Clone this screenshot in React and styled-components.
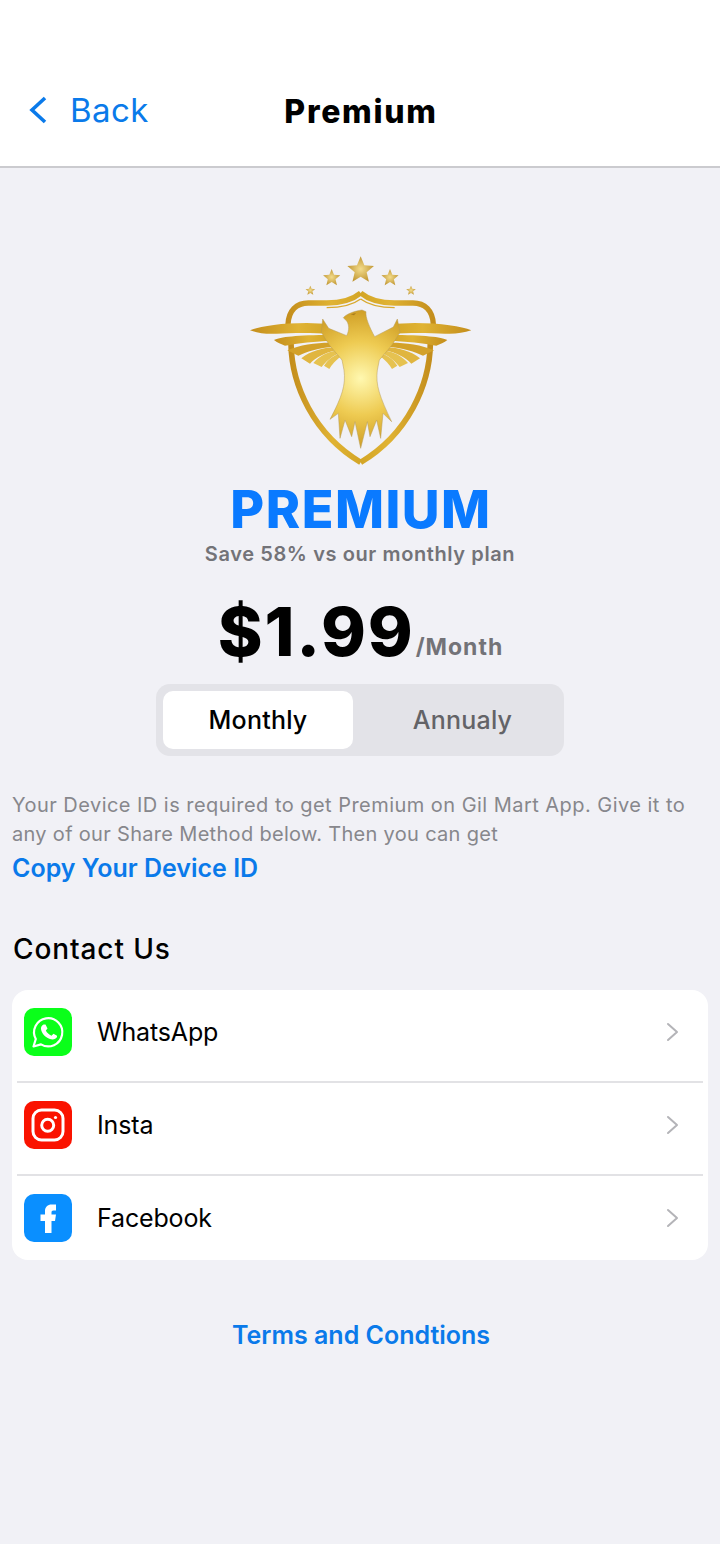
import React from "react";
import styled, { createGlobalStyle } from "styled-components";

const Global = createGlobalStyle`
  html, body { margin: 0; padding: 0; background: #f1f1f6; }
  body { font-family: Inter, "Liberation Sans", sans-serif; }
  * { box-sizing: border-box; }
`;

const Page = styled.div`
  width: 720px;
  height: 1544px;
  overflow: hidden;
  background: #f1f1f6;
  display: flex;
  flex-direction: column;
`;

const Header = styled.header`
  height: 168px;
  flex: none;
  background: #fff;
  border-bottom: 2px solid #cbcbcf;
  display: grid;
  grid-template-columns: 1fr auto 1fr;
  align-items: start;
  padding: 90px 0 0 0;
`;

const BackLink = styled.a`
  display: flex;
  align-items: center;
  gap: 21px;
  padding-left: 27px;
  height: 40px;
  font-size: 33px;
  letter-spacing: 0.4px;
  color: #0a7aea;
  svg { display: block; }
`;

const HeaderTitle = styled.h1`
  margin: 2px 0 0;
  padding-left: 2px;
  line-height: 40px;
  font-size: 32px;
  font-weight: 800;
  letter-spacing: 1.7px;
  color: #000;
`;

const Hero = styled.section`
  display: flex;
  flex-direction: column;
  align-items: center;
  padding-top: 77px;
`;

const Emblem = styled.svg`
  width: 260px;
  height: 230px;
  display: block;
  filter: blur(0.5px);
`;

const PlanName = styled.h2`
  margin: 5px 0 0 2px;
  font-size: 52px;
  line-height: 60px;
  font-weight: 800;
  letter-spacing: 1.5px;
  color: #0a7aff;
`;

const Saving = styled.p`
  margin: 0;
  font-size: 20px;
  line-height: 28px;
  font-weight: 600;
  letter-spacing: 0.6px;
  color: #737378;
`;

const PriceRow = styled.div`
  display: flex;
  align-items: baseline;
  margin-top: 25px;
  margin-left: 1px;
  height: 76px;
`;

const Price = styled.span`
  font-size: 68px;
  line-height: 76px;
  font-weight: 800;
  letter-spacing: 1.8px;
  color: #000;
`;

const Period = styled.span`
  font-size: 23px;
  font-weight: 700;
  letter-spacing: 1px;
  color: #737378;
  margin-left: 1px;
  position: relative;
  top: -1px;
`;

const Segment = styled.div`
  width: 408px;
  height: 72px;
  margin-top: 15px;
  padding: 7px;
  border-radius: 14px;
  background: #e3e3e8;
  display: grid;
  grid-template-columns: 190px 1fr;
`;

const SegmentItem = styled.div`
  display: flex;
  align-items: center;
  justify-content: center;
  border-radius: 10px;
  font-size: 25px;
  font-weight: 500;
  letter-spacing: 0.2px;
  padding-left: ${(p) => (p.$active ? "0" : "15px")};
  background: ${(p) => (p.$active ? "#fff" : "transparent")};
  color: ${(p) => (p.$active ? "#000" : "#636367")};
`;

const Info = styled.section`
  padding: 35px 12px 0;
`;

const InfoLine = styled.span`
  display: block;
  font-size: 20px;
  line-height: 29px;
  letter-spacing: ${(p) => p.$spacing};
  color: #87878c;
`;

const CopyLink = styled.a`
  display: block;
  margin-top: 4px;
  font-size: 25px;
  line-height: 30px;
  font-weight: 600;
  color: #0a7aea;
`;

const ContactTitle = styled.h3`
  margin: 49px 0 0 1px;
  font-size: 28px;
  line-height: 34px;
  font-weight: 500;
  letter-spacing: 0.9px;
  color: #000;
`;

const Card = styled.ul`
  list-style: none;
  margin: 24px 12px 0;
  padding: 0;
  height: 270px;
  background: #fff;
  border-radius: 16px;
  overflow: hidden;
`;

const Row = styled.li`
  position: relative;
  height: 93px;
  padding: 18px 28px 0 12px;
  display: flex;
  align-items: flex-start;
  &:not(:last-child)::after {
    content: "";
    position: absolute;
    left: 5px;
    right: 5px;
    bottom: 0;
    height: 2px;
    background: #e2e2e5;
  }
`;

const IconTile = styled.svg`
  width: 48px;
  height: 48px;
  flex: none;
  display: block;
  border-radius: 10px;
  background: ${(p) => p.$bg};
`;

const RowLabel = styled.span`
  flex: 1;
  margin-left: 25px;
  font-size: 25px;
  line-height: 48px;
  letter-spacing: -0.15px;
  color: #000;
`;

const Chevron = styled.svg`
  width: 14px;
  height: 20px;
  margin-top: 14px;
  display: block;
`;

const Terms = styled.a`
  display: block;
  margin-top: 60px;
  padding-left: 2px;
  text-align: center;
  font-size: 25px;
  line-height: 30px;
  font-weight: 600;
  color: #0a7aea;
`;

const star = (cx, cy, r) => {
  const pts = [];
  for (let i = 0; i < 10; i++) {
    const rad = i % 2 ? r * 0.45 : r;
    const a = -Math.PI / 2 + (i * Math.PI) / 5;
    pts.push(`${(cx + rad * Math.cos(a)).toFixed(1)},${(cy + rad * Math.sin(a)).toFixed(1)}`);
  }
  return pts.join(" ");
};

function WingHalf() {
  return (
    <g>
      <path d="M392 144C368 164 335 174 290 174L235 174C200 174 176 196 174 238" fill="none" stroke="url(#goldBand)" strokeWidth="16" />
      <path d="M392 162C368 180 335 188 290 188" fill="none" stroke="#d8a92e" strokeWidth="4" />
      <path d="M183 296C185 420 250 567 392 652" fill="none" stroke="url(#goldBand)" strokeWidth="17" />
      <path d="M60 256C90 244 150 234 230 234L285 236L303 266C230 262 180 264 140 266C110 268 85 264 60 256Z" fill="url(#goldBand)" />
      <path d="M132 285C150 276 200 270 304 270L306 288C260 288 200 296 165 302C155 298 140 292 132 285Z" fill="url(#goldBand)" />
      <path d="M172 316C210 298 265 292 308 293L310 305C270 307 225 322 205 332Z" fill="#d3a129" />
      <path d="M214 340C240 318 280 308 314 306L318 316C285 322 255 340 240 356Z" fill="#e0b53f" />
      <path d="M250 354C270 332 295 320 322 316L324 326C305 334 285 352 275 366Z" fill="#e6c250" />
      <path d="M282 362C295 342 310 332 328 326L332 336C318 344 305 360 298 372Z" fill="#e6c250" />
    </g>
  );
}

function EagleEmblem() {
  return (
    <Emblem viewBox="0 0 780 690">
      <defs>
        <linearGradient id="goldBand" x1="0" y1="0" x2="1" y2="0">
          <stop offset="0" stopColor="#c48e1c" />
          <stop offset="0.6" stopColor="#e0b333" />
          <stop offset="1" stopColor="#d3a526" />
        </linearGradient>
        <radialGradient id="goldBody" gradientUnits="userSpaceOnUse" cx="392" cy="400" r="220">
          <stop offset="0" stopColor="#fff8b0" />
          <stop offset="0.5" stopColor="#eecb52" />
          <stop offset="1" stopColor="#cb981f" />
        </radialGradient>
        <radialGradient id="goldStar" cx="0.5" cy="0.5" r="0.6">
          <stop offset="0" stopColor="#f3dc8c" />
          <stop offset="1" stopColor="#b98c26" />
        </radialGradient>
      </defs>
      <polygon points={star(392, 76, 42)} fill="url(#goldStar)" />
      <polygon points={star(305, 99, 27)} fill="url(#goldStar)" />
      <polygon points={star(480, 99, 27)} fill="url(#goldStar)" />
      <polygon points={star(241, 137, 15)} fill="url(#goldStar)" />
      <polygon points={star(543, 137, 15)} fill="url(#goldStar)" />
      <WingHalf />
      <g transform="translate(784 0) scale(-1 1)">
        <WingHalf />
      </g>
      <path
        d="M278 222L296 250L350 272C358 256 358 240 350 228L340 218C350 206 375 198 396 195L408 200C405 216 420 250 434 275L490 246L502 222L510 262L486 300L448 345L442 375C436 420 449 455 485 530L459 505L452 580L440 525L420 575L412 530L392 610L375 530L365 575L345 525L330 580L325 505L300 523C336 455 348 420 342 375L336 345L298 300L274 262Z"
        fill="url(#goldBody)"
        stroke="#b79a55"
        strokeWidth="1.5"
      />
      <path d="M362 208L378 204L372 211Z" fill="#a97d1c" />
    </Emblem>
  );
}

const Arrow = () => (
  <Chevron viewBox="0 0 14 20">
    <path d="M2 2L11 10L2 18" fill="none" stroke="#b4b4b8" strokeWidth="2" strokeLinecap="round" strokeLinejoin="round" />
  </Chevron>
);

const WhatsAppIcon = () => (
  <IconTile $bg="#0aff1a" viewBox="0 0 48 48">
    <path d="M9.5 38.5L11.8 31A14.1 14.1 0 1 1 17 36.4Z" fill="none" stroke="#fff" strokeWidth="2.2" strokeLinejoin="round" />
    <path
      d="M19.5 16.5L21.5 16.5L23.5 20.5L21.8 22.6C23 25 25 26.7 27.5 27.8L29.5 25.8L33 27.7L33 29C32 31 29 32 26 31C21 29.5 17.5 25 17 21C16.8 19 18 17 19.5 16.5Z"
      fill="#fff"
    />
  </IconTile>
);

const InstaIcon = () => (
  <IconTile $bg="#fa1300" viewBox="0 0 48 48">
    <rect x="9" y="9" width="30" height="30" rx="8.5" fill="none" stroke="#fff" strokeWidth="3" />
    <circle cx="23.7" cy="24.3" r="6" fill="none" stroke="#fff" strokeWidth="3" />
    <circle cx="31.5" cy="16.5" r="1.6" fill="#fff" />
  </IconTile>
);

const FacebookIcon = () => (
  <IconTile $bg="#0a8fff" viewBox="0 0 48 48">
    <path d="M21 39V27H16.5V20.5H21V17C21 13 23.8 10.5 27.5 10.5H32V16.5H29.5C28 16.5 27.5 17.3 27.5 18.5V20.5H32L31 27H27.5V39Z" fill="#fff" />
  </IconTile>
);

const contacts = [
  { name: "WhatsApp", icon: <WhatsAppIcon /> },
  { name: "Insta", icon: <InstaIcon /> },
  { name: "Facebook", icon: <FacebookIcon /> },
];

export default function App() {
  return (
    <Page>
      <Global />
      <Header>
        <BackLink>
          <svg width="22" height="30" viewBox="0 0 22 30">
            <path d="M18 3L5 15L18 27" fill="none" stroke="#0a7aea" strokeWidth="3.6" />
          </svg>
          Back
        </BackLink>
        <HeaderTitle>Premium</HeaderTitle>
      </Header>
      <Hero>
        <EagleEmblem />
        <PlanName>PREMIUM</PlanName>
        <Saving>Save 58% vs our monthly plan</Saving>
        <PriceRow>
          <Price>$1.99</Price>
          <Period>/Month</Period>
        </PriceRow>
        <Segment>
          <SegmentItem $active>Monthly</SegmentItem>
          <SegmentItem>Annualy</SegmentItem>
        </Segment>
      </Hero>
      <Info>
        <InfoLine $spacing="0.46px">
          Your Device ID is required to get Premium on Gil Mart App. Give it to
        </InfoLine>
        <InfoLine $spacing="0.31px">any of our Share Method below. Then you can get</InfoLine>
        <CopyLink>Copy Your Device ID</CopyLink>
        <ContactTitle>Contact Us</ContactTitle>
      </Info>
      <Card>
        {contacts.map((c) => (
          <Row key={c.name}>
            {c.icon}
            <RowLabel>{c.name}</RowLabel>
            <Arrow />
          </Row>
        ))}
      </Card>
      <Terms>Terms and Condtions</Terms>
    </Page>
  );
}
